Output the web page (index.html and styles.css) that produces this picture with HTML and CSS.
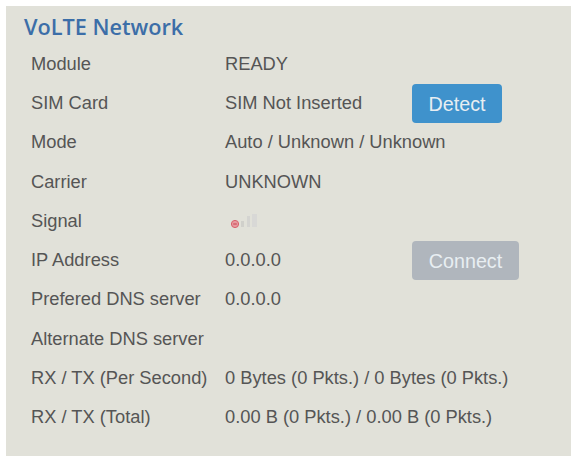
FILE: index.html
```html
<!DOCTYPE html>
<html lang="en">
<head>
<meta charset="utf-8">
<title>VoLTE Network</title>
<link rel="stylesheet" href="styles.css">
</head>
<body>
<section class="panel">
  <h2 class="title">VoLTE Network</h2>
  <div class="rows">
    <div class="row"><span class="label">Module</span><span class="value">READY</span></div>
    <div class="row"><span class="label">SIM Card</span><span class="value">SIM Not Inserted</span><button class="btn btn-detect">Detect</button></div>
    <div class="row"><span class="label">Mode</span><span class="value">Auto / Unknown / Unknown</span></div>
    <div class="row"><span class="label">Carrier</span><span class="value">UNKNOWN</span></div>
    <div class="row"><span class="label">Signal</span><span class="value">
      <svg class="signal" width="34" height="18" viewBox="0 0 34 18">
        <circle cx="7" cy="12" r="3.6" fill="#e79aa0" stroke="#d9606a" stroke-width="1"/>
        <path d="M5.2 12h3.6" stroke="#c8434f" stroke-width="1"/>
        <rect x="13" y="9" width="3" height="6" fill="#d0d0cb"/>
        <rect x="19" y="4" width="3" height="11" fill="#d4d4d1"/>
        <rect x="24" y="2" width="5" height="13" fill="#d8d8d6"/>
      </svg>
    </span></div>
    <div class="row"><span class="label">IP Address</span><span class="value">0.0.0.0</span><button class="btn btn-connect">Connect</button></div>
    <div class="row"><span class="label">Prefered DNS server</span><span class="value">0.0.0.0</span></div>
    <div class="row"><span class="label">Alternate DNS server</span><span class="value"></span></div>
    <div class="row"><span class="label">RX / TX (Per Second)</span><span class="value">0 Bytes (0 Pkts.) / 0 Bytes (0 Pkts.)</span></div>
    <div class="row"><span class="label">RX / TX (Total)</span><span class="value">0.00 B (0 Pkts.) / 0.00 B (0 Pkts.)</span></div>
  </div>
</section>
</body>
</html>
```
FILE: styles.css
```css
html, body { margin: 0; padding: 0; background: #fff; }
body { padding: 6px 6px 18px; font-family: "Liberation Sans", Arial, sans-serif; }
.panel {
  background: #e1e1d9;
  height: 450px;
  box-sizing: border-box;
  padding: 8px 0 0 18px;
}
.title {
  margin: 0;
  font-family: "Open Sans", "Noto Sans", sans-serif;
  font-size: 21.7px;
  font-weight: 600;
  line-height: 26px;
  color: #3c6ea8;
}
.rows { margin-top: 4px; padding-left: 7px; }
.row {
  display: flex;
  align-items: center;
  height: 39.3px;
  font-size: 18.3px;
  color: #555;
  position: relative;
}
.label { width: 194px; flex: none; }
.value { flex: none; display: flex; align-items: center; }
.btn {
  position: absolute;
  left: 381px;
  top: 1px;
  height: 39px;
  border: 0;
  border-radius: 4px;
  font: inherit;
  font-size: 19.7px;
  line-height: 41px;
  color: #e8eef2;
  padding: 0;
}
.btn-detect { width: 90px; background: #3f92cc; }
.btn-connect { width: 107px; background: #b0b6bd; }
.signal { display: block; margin-top: 0; margin-left: 3px; }
```
